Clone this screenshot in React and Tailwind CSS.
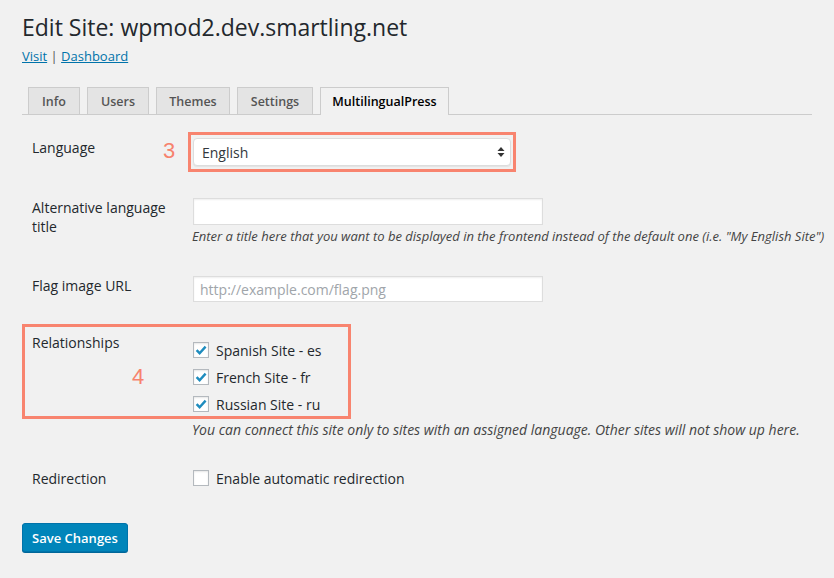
import { useState } from "react";

const font = { fontFamily: '"Open Sans", "Liberation Sans", sans-serif' };

function Check({ checked, onChange }) {
  return (
    <button
      type="button"
      onClick={onChange}
      className="w-[16px] h-[16px] bg-white border border-[#b4b9be] shadow-[inset_0_1px_2px_rgba(0,0,0,0.1)] flex items-center justify-center flex-none"
    >
      {checked && (
        <svg width="12" height="12" viewBox="0 0 12 12">
          <path
            d="M1.6 6.2 L4.6 9.2 L10.6 2.6"
            fill="none"
            stroke="#1e8cbe"
            strokeWidth="2.4"
          />
        </svg>
      )}
    </button>
  );
}

const tabs = [
  { label: "Info", w: "w-[52px]" },
  { label: "Users", w: "w-[62px]" },
  { label: "Themes", w: "w-[74px]" },
  { label: "Settings", w: "w-[76px]" },
  { label: "MultilingualPress", w: "w-[129px]" },
];

export default function App() {
  const [active, setActive] = useState("MultilingualPress");
  const [sites, setSites] = useState({ es: true, fr: true, ru: true });
  const [redirect, setRedirect] = useState(false);

  const toggle = (k) => setSites({ ...sites, [k]: !sites[k] });

  return (
    <div
      style={font}
      className="w-[834px] h-[578px] overflow-hidden bg-[#f1f1f1] px-[22px] text-[#23282d]"
    >
      <h1 className="pt-[13px] text-[23px] leading-[29px] font-normal">
        Edit Site: wpmod2.dev.smartling.net
      </h1>
      <p className="mt-[5px] text-[13px] leading-[18px] text-[#555]">
        <a href="#" className="text-[#0073aa] underline">
          Visit
        </a>{" "}
        |{" "}
        <a href="#" className="text-[#0073aa] underline">
          Dashboard
        </a>
      </p>

      {/* tabs */}
      <div className="mt-[22px] flex items-end gap-[7px] pl-[6px] border-b border-[#ccc] h-[28px]">
        {tabs.map((t) => {
          const on = t.label === active;
          return (
            <button
              key={t.label}
              onClick={() => setActive(t.label)}
              className={`${t.w} border border-b-0 border-[#ccc] text-[12.5px] font-semibold leading-[27px] text-center ${
                on
                  ? "h-[28px] -mb-px bg-[#f1f1f1] text-black"
                  : "h-[27px] bg-[#e4e4e4] text-[#555]"
              }`}
            >
              {t.label}
            </button>
          );
        })}
      </div>

      {/* Language */}
      <div className="mt-[17px] flex items-start">
        <div className="w-[141px] flex-none pl-[10px] pt-[6px] text-[14px] leading-[20px]">
          Language
        </div>
        <div
          className="w-[25px] flex-none text-[22px] leading-[26px] pt-[6px] text-[#f7826d]"
          style={{ fontFamily: '"Liberation Sans", sans-serif' }}
        >
          3
        </div>
        <div className="border-[3px] border-[#f8846f] px-[2px] py-[3px]">
          <div className="w-[318px] h-[28px] bg-white border border-[#ddd] rounded-[4px] shadow-[0_1px_1px_rgba(0,0,0,0.06)] flex items-center pl-[8px] pr-[5px]">
            <span className="flex-1 text-[14px] text-[#32373c]">English</span>
            <svg width="8" height="12" viewBox="0 0 8 12">
              <path d="M4 1 L7.5 5 L0.5 5 Z" fill="#333" />
              <path d="M4 11 L7.5 7 L0.5 7 Z" fill="#333" />
            </svg>
          </div>
        </div>
      </div>

      {/* Alternative language title */}
      <div className="mt-[26px] flex items-start">
        <div className="w-[171px] flex-none pl-[10px] text-[14px] leading-[19px]">
          Alternative language
          <br />
          title
        </div>
        <div>
          <input
            type="text"
            className="block w-[350px] h-[27px] bg-white border border-[#ddd] shadow-[inset_0_1px_2px_rgba(0,0,0,0.07)] outline-none px-[6px] text-[14px]"
          />
          <p className="mt-[2px] -ml-px text-[13px] leading-[18px] italic text-[#444] whitespace-nowrap">
            Enter a title here that you want to be displayed in the frontend
            instead of the default one (i.e. "My English Site")
          </p>
        </div>
      </div>

      {/* Flag image URL */}
      <div className="mt-[31px] flex items-start">
        <div className="w-[171px] flex-none pl-[10px] text-[14px] leading-[19px]">
          Flag image URL
        </div>
        <input
          type="text"
          placeholder="http://example.com/flag.png"
          className="block w-[350px] h-[26px] bg-white border border-[#ddd] shadow-[inset_0_1px_2px_rgba(0,0,0,0.07)] outline-none px-[6px] text-[14px] placeholder:text-[#a0a5aa]"
        />
      </div>

      {/* Relationships */}
      <div className="mt-[22px] w-[329px] border-[3px] border-[#f8846f] flex items-start">
        <div className="w-[168px] flex-none pl-[7px] pt-[6px] text-[14px] leading-[20px]">
          Relationships
          <div
            className="mt-[11px] ml-[100px] text-[22px] leading-[26px] text-[#f7826d]"
            style={{ fontFamily: '"Liberation Sans", sans-serif' }}
          >
            4
          </div>
        </div>
        <div className="pt-[15px] pb-[4px] flex flex-col gap-[11px]">
          {[
            ["es", "Spanish Site - es"],
            ["fr", "French Site - fr"],
            ["ru", "Russian Site - ru"],
          ].map(([k, label]) => (
            <label
              key={k}
              className="flex items-center h-[16px] text-[14px] cursor-pointer"
            >
              <Check checked={sites[k]} onChange={() => toggle(k)} />
              <span className="ml-[7px]">{label}</span>
            </label>
          ))}
        </div>
      </div>
      <p className="mt-[1px] ml-[170px] text-[14px] leading-[19px] italic text-[#444] whitespace-nowrap">
        You can connect this site only to sites with an assigned language.
        Other sites will not show up here.
      </p>

      {/* Redirection */}
      <div className="mt-[29px] flex items-center h-[20px]">
        <div className="w-[171px] flex-none pl-[10px] text-[14px]">Redirection</div>
        <label className="flex items-center text-[14px] cursor-pointer">
          <Check checked={redirect} onChange={() => setRedirect(!redirect)} />
          <span className="ml-[7px]">Enable automatic redirection</span>
        </label>
      </div>

      <button className="mt-[35px] w-[106px] h-[29px] bg-[#0085ba] border border-[#0073aa] rounded-[3px] shadow-[0_1px_0_#006799] text-white text-[13px] font-semibold leading-[26px]">
        Save Changes
      </button>
    </div>
  );
}
